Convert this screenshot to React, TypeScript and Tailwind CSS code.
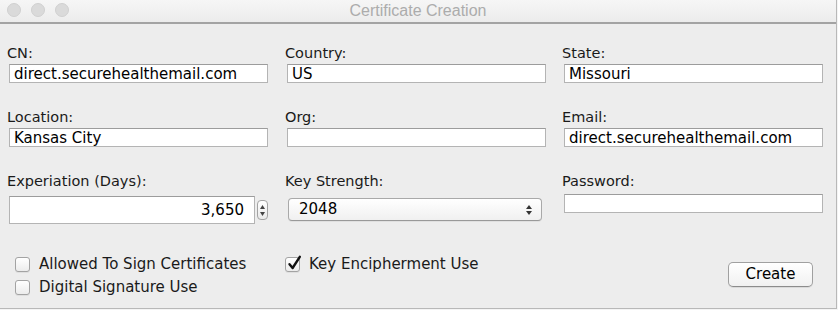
import React from 'react';

const font = { fontFamily: '"DejaVu Sans", "Liberation Sans", sans-serif' };

function Field({ value = '', className = '' }: { value?: string; className?: string }) {
  return (
    <div
      className={`ml-[2px] w-[259px] h-[19px] bg-white border border-[#b4b4b4] border-t-[#9c9c9c] pl-[4px] pt-[1px] text-[15px] leading-[17px] text-black overflow-hidden whitespace-nowrap ${className}`}
    >
      {value}
    </div>
  );
}

function Label({ children }: { children: React.ReactNode }) {
  return <div className="text-[14.5px] leading-[17px] text-[#1a1a1a] h-[16px]">{children}</div>;
}

function Checkbox({ checked = false }: { checked?: boolean }) {
  return (
    <div className="relative shrink-0 w-[15px] h-[15px] rounded-[3px] border border-[#a3a3a3] bg-gradient-to-b from-white to-[#ececec] shadow-[0_1px_0_rgba(0,0,0,0.06)]">
      {checked && (
        <svg className="absolute left-[1px] top-[-3px]" width="15" height="16" viewBox="0 0 15 16">
          <path d="M2.5 9.2 L5.6 13 L12.8 1.8" fill="none" stroke="#111" strokeWidth="2.4" strokeLinecap="round" strokeLinejoin="round" />
        </svg>
      )}
    </div>
  );
}

export default function App() {
  return (
    <div className="w-[838px] h-[310px] bg-[#f4f4f4]" style={font}>
      <div className="w-[837px] h-[309px] bg-[#ededed] border-r border-b border-[#b8b8b8] flex flex-col">
        {/* title bar */}
        <div className="relative h-[24px] bg-gradient-to-b from-[#f6f6f6] to-[#ececec] border-b-2 border-[#a3a3a3] flex items-center shrink-0">
          <div className="flex gap-[10px] pl-[7px] -mt-[2px]">
            <span className="w-[14px] h-[14px] rounded-full bg-[#dadada] border border-[#d0d0d0]" />
            <span className="w-[14px] h-[14px] rounded-full bg-[#dadada] border border-[#d0d0d0]" />
            <span className="w-[14px] h-[14px] rounded-full bg-[#dadada] border border-[#d0d0d0]" />
          </div>
          <div
            className="absolute left-0 right-0 top-[1px] text-center text-[16px] leading-[19px] text-[#acacac]"
            style={{ fontFamily: '"Liberation Sans", Arial, sans-serif' }}
          >
            Certificate Creation
          </div>
        </div>

        {/* form grid */}
        <div className="grid grid-cols-[278px_277px_260px] pl-[7px] pt-[21px] gap-y-[26px]">
          <div>
            <Label>CN:</Label>
            <Field value="direct.securehealthemail.com" className="mt-[3px]" />
          </div>
          <div>
            <Label>Country:</Label>
            <Field value="US" className="mt-[3px]" />
          </div>
          <div>
            <Label>State:</Label>
            <Field value="Missouri" className="mt-[3px]" />
          </div>

          <div>
            <Label>Location:</Label>
            <Field value="Kansas City" className="mt-[3px]" />
          </div>
          <div>
            <Label>Org:</Label>
            <Field className="mt-[3px]" />
          </div>
          <div>
            <Label>Email:</Label>
            <Field value="direct.securehealthemail.com" className="mt-[3px]" />
          </div>

          <div>
            <Label>Experiation (Days):</Label>
            <div className="flex items-center mt-[7px] ml-[2px]">
              <div className="w-[246px] h-[28px] bg-white border border-[#b4b4b4] border-t-[#9c9c9c] flex items-center justify-end pr-[10px] text-[15px] leading-none text-black">
                3,650
              </div>
              <div className="ml-[2px] w-[11px] h-[20px] rounded-[4px] border border-[#a3a3a3] bg-gradient-to-b from-white to-[#eaeaea] flex flex-col items-center justify-center gap-[3px]">
                <svg width="5" height="4" viewBox="0 0 5 4"><path d="M2.5 0 L5 4 L0 4 Z" fill="#444" /></svg>
                <svg width="5" height="4" viewBox="0 0 5 4"><path d="M0 0 L5 0 L2.5 4 Z" fill="#444" /></svg>
              </div>
            </div>
          </div>
          <div>
            <Label>Key Strength:</Label>
            <div className="mt-[9px] ml-[3px] w-[254px] h-[23px] rounded-[4px] border border-[#a9a9a9] border-b-[#999] bg-gradient-to-b from-white to-[#f0f0f0] flex items-center justify-between pl-[10px] pr-[9px] text-[15px] leading-none text-black shadow-[0_1px_0_rgba(0,0,0,0.05)]">
              <span>2048</span>
              <span className="flex flex-col items-center gap-[2px]">
                <svg width="6" height="4" viewBox="0 0 6 4"><path d="M3 0 L6 4 L0 4 Z" fill="#333" /></svg>
                <svg width="6" height="4" viewBox="0 0 6 4"><path d="M0 0 L6 0 L3 4 Z" fill="#333" /></svg>
              </span>
            </div>
          </div>
          <div>
            <Label>Password:</Label>
            <Field className="mt-[5px]" />
          </div>
        </div>

        {/* options + button */}
        <div className="flex pl-[15px] pr-[23px] mt-[33px]">
          <div className="w-[270px] flex flex-col gap-[8px]">
            <div className="flex items-center gap-[9px] text-[15px] leading-[15px] text-[#1a1a1a]">
              <Checkbox />
              <span>Allowed To Sign Certificates</span>
            </div>
            <div className="flex items-center gap-[9px] text-[15px] leading-[15px] text-[#1a1a1a]">
              <Checkbox />
              <span>Digital Signature Use</span>
            </div>
          </div>
          <div className="flex items-start">
            <div className="flex items-center gap-[9px] text-[15px] leading-[15px] text-[#1a1a1a]">
              <Checkbox checked />
              <span>Key Encipherment Use</span>
            </div>
          </div>
          <div className="ml-auto pt-[5px]">
            <button className="w-[85px] h-[25px] rounded-[5px] border border-[#a0a0a0] border-b-[#8c8c8c] bg-gradient-to-b from-white to-[#f1f1f1] text-[15px] leading-none text-black shadow-[0_1px_0_rgba(0,0,0,0.08)]">
              Create
            </button>
          </div>
        </div>
      </div>
    </div>
  );
}
